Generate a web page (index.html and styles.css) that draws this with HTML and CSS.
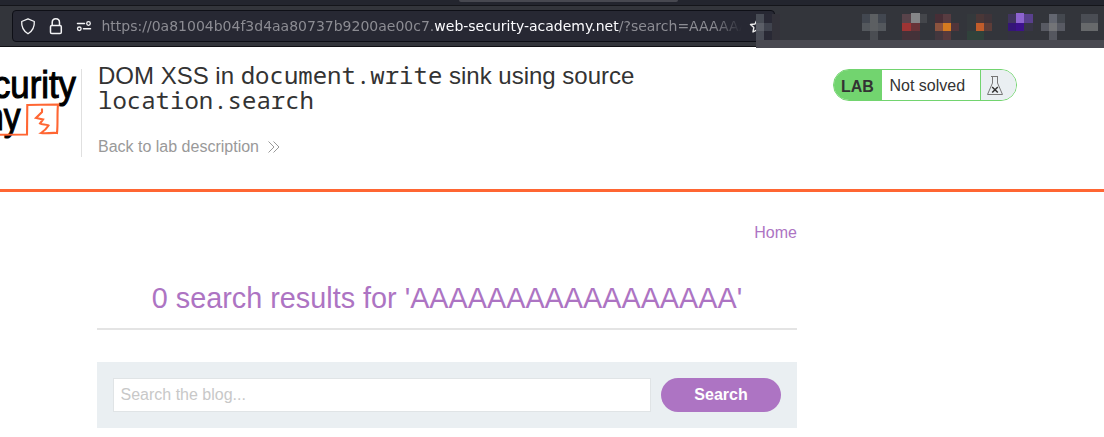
FILE: index.html
```
<!DOCTYPE html>
<html lang="en">
<head>
<meta charset="utf-8">
<title>DOM XSS in document.write sink using source location.search</title>
<link rel="stylesheet" href="styles.css">
</head>
<body>
<div class="browser">
  <div class="tabs"><div class="tab"></div></div>
  <div class="toolbar">
    <div class="address">
      <svg class="icons" width="88" height="30" fill="none" stroke="#f4f4f6" stroke-width="1.5" stroke-linecap="round" stroke-linejoin="round">
        <path d="M15 7.8 L21.3 10.5 C21.7 16 19.5 20 15 22.8 C10.500 20 8.300 16 8.700 10.500Z" stroke-width="1.3"/>
        <rect x="37.500" y="14.500" width="10.800" height="8" rx="1.300"/><path d="M39.200 14V11.500C39.200 6.500 46.500 6.500 46.500 11.500V14"/>
        <path d="M64.500 12.500H71.500M70.500 17.800H77.500"/><circle cx="75.500" cy="12.500" r="1.800" stroke-width="1.300"/><circle cx="66.300" cy="17.800" r="1.800" stroke-width="1.300"/>
      </svg>
      <div class="url">https://0a81004b04f3d4aa80737b9200ae00c7.<span class="domain">web-security-academy.net</span>/?search=AAAAAAAA</div>
      <svg class="star" width="16" height="16" viewBox="0 0 16 16" fill="none" stroke="#eee" stroke-width="1.400" stroke-linejoin="round"><path d="M8 1.800L10 6L14.500 6.500L11.200 9.600L12 14L8 11.800L4 14L4.800 9.600L1.500 6.500L6 6Z"/></svg>
    </div>
  </div>
  <svg class="mosaic" width="348" height="35" shape-rendering="crispEdges">
    <path fill="#484850" d="M0 27h348v8H0z"/><path fill="#36363f" d="M8 1h8v26H8z"/>
    <path fill="#484c55" d="M0 1h8v9H0z"/><path fill="#5b5e67" d="M0 10h8v8H0z"/><path fill="#4a4d57" d="M0 18h8v9H0z"/>
    <path fill="#292935" d="M8 1h8v9H8zM8 18h8v9H8z"/><path fill="#40434e" d="M8 10h8v8H8z"/><path fill="#33323a" d="M16 1h8v26h-8z"/>
    <path fill="#424750" d="M106 1h24v9h-24z"/><path fill="#54585d" d="M106 10h24v8h-24z"/><path fill="#5c5f62" d="M114 1h8v17h-8z"/><path fill="#4a4d52" d="M114 18h8v9h-8z"/>
    <path fill="#58434a" d="M146 1h9v9h-9z"/><path fill="#858688" d="M155 0h9v10h-9z"/><path fill="#9e3434" d="M146 10h9v8h-9z"/><path fill="#683438" d="M155 10h9v8h-9z"/><path fill="#443239" d="M146 18h18v9h-18z"/>
    <path fill="#44464b" d="M164 1h7v9h-7z"/><path fill="#472e36" d="M179 1h8v9h-8z"/><path fill="#583c41" d="M187 1h8v9h-8z"/><path fill="#8b533e" d="M179 10h8v8h-8z"/><path fill="#d57b20" d="M187 10h8v8h-8z"/><path fill="#51353a" d="M195 10h8v8h-8z"/><path fill="#43373e" d="M179 18h8v9h-8z"/><path fill="#573a3d" d="M187 18h8v9h-8z"/>
    <path fill="#34393c" d="M211 1h9v17h-9z"/><path fill="#4a3737" d="M220 1h8v9h-8z"/><path fill="#403439" d="M228 1h8v9h-8z"/><path fill="#c25c2a" d="M220 10h8v8h-8z"/><path fill="#5d3d38" d="M228 10h8v8h-8z"/><path fill="#30423b" d="M211 18h17v9h-17z"/>
    <path fill="#40345f" d="M252 1h8v9h-8z"/><path fill="#8d63cf" d="M260 0h8v10h-8z"/><path fill="#59408d" d="M268 1h9v9h-9z"/><path fill="#351578" d="M252 10h8v8h-8z"/><path fill="#3d118c" d="M260 10h8v8h-8z"/><path fill="#383548" d="M268 10h9v8h-9z"/><path fill="#34333f" d="M252 18h16v9h-16z"/>
    <path fill="#636670" d="M293 1h8v9h-8z"/><path fill="#44484f" d="M301 1h8v9h-8z"/><path fill="#585a63" d="M285 10h24v8h-24z"/><path fill="#737477" d="M293 10h8v8h-8z"/><path fill="#55575f" d="M293 18h8v9h-8z"/>
    <path fill="#4a4d54" d="M325 1h17v9h-17z"/><path fill="#67696b" d="M325 10h17v8h-17z"/>
  </svg>
</div>
<header class="lab-header">
  <svg class="logo" width="81" height="88" viewBox="0 69 81 88">
    <g class="logo-text"><text x="-7" y="97.500" textLength="83" lengthAdjust="spacingAndGlyphs">curity</text><text x="-15" y="129.500" textLength="35.500" lengthAdjust="spacingAndGlyphs">ny</text></g>
    <path d="M0 134.700L27 134.500L27.300 105C38 104.500 48 104.500 58 104.500C57 114 58 124 57 133C51 132.500 46 133.800 41 133C44 131 47 128 48.500 125.500C46 124 42 125 40 123.500L43 119.500L36 118L42 112L42 108.500" fill="none" stroke="#ff6633" stroke-width="2.100"/>
  </svg>
  <div class="title">
    <h2>DOM XSS in <code>document.write</code> sink using source <code>location.search</code></h2>
    <a class="back">Back to lab description<svg width="14" height="12" fill="none" stroke="#999" stroke-width="1"><path d="M1.500 .5L7 6L1.500 11.500M6.500 .5L12 6L6.500 11.500"/></svg></a>
  </div>
  <div class="status"><b>LAB</b><span>Not solved</span><i><svg width="18" height="22" fill="none" stroke="#777" stroke-width="1"><path d="M5 1.500H12M6.500 1.500V8L1.500 19.500H16.500L11.500 8V1.500"/><path d="M6.200 12L11.800 17.500M11.800 12L6.200 17.500" stroke="#333" stroke-width="1.500"/></svg></i></div>
</header>
<main>
  <nav>Home</nav>
  <h1>0 search results for 'AAAAAAAAAAAAAAAAA'</h1>
  <form class="search"><input type="text" placeholder="Search the blog..."><button type="button">Search</button></form>
</main>
</body>
</html>
```
FILE: styles.css
```
* { box-sizing: border-box; }
body { margin: 0; height: 437px; overflow: hidden; background: #fff; color: #333; font: 16px "Liberation Sans", Arial, sans-serif; }
.browser { position: relative; height: 47px; background: #33353b; }
.tabs { height: 6px; background: #23252e; border-bottom: 1px solid #14151a; }
.tab { width: 219px; height: 2px; margin-left: 459px; background: #474850; border-radius: 0 0 3px 3px; }
.toolbar { height: 41px; padding: 4px 12px; border-bottom: 1px solid #101014; }
.address { width: 763px; height: 32px; display: flex; align-items: center; border: 1px solid #0e0f16; border-radius: 4px; background: #272833; }
.icons { flex: none; }
.url { width: 641px; padding-left: .5px; overflow: hidden; white-space: nowrap; color: #8c8c93; font: 14px/30px "DejaVu Sans", sans-serif; -webkit-mask-image: linear-gradient(to right, #000 612px, transparent 641px); mask-image: linear-gradient(to right, #000 612px, transparent 641px); }
.domain { color: #fbfbfe; }
.star { margin-left: 7px; flex: none; }
.mosaic { position: absolute; left: 756px; top: 13px; }
.lab-header { height: 145px; padding-top: 22px; display: flex; align-items: flex-start; border-bottom: 3px solid #ff6633; }
.logo { flex: none; }
.logo-text { font: 38px "Liberation Sans", Arial, sans-serif; fill: #000; stroke: #000; stroke-width: 1.1px; }
.title { width: 736px; height: 88px; padding: 0 150px 0 16px; border-left: 1px solid #e0e0e0; }
h2 { margin: -6px 0 0; font-size: 24px; font-weight: 400; line-height: 25px; }
code { font-family: "Noto Sans Mono", "DejaVu Sans Mono", monospace; font-size: 24px; line-height: 24px; }
.back { display: flex; align-items: center; gap: 8px; margin-top: 25px; line-height: 18px; color: #999; }
.status { width: 184px; height: 32px; margin-left: 16px; display: flex; overflow: hidden; border: 1px solid #72d46f; border-radius: 16px; line-height: 32px; }
.status b { width: 48px; padding: 1px 0 0 7px; background: #72d46f; }
.status span { width: 98px; padding-left: 7.5px; }
.status i { flex: 1; padding: 5px 0 0 5px; border-left: 1px solid #72d46f; background: #eaeff2; line-height: 0; }
main { width: 700px; margin-left: 97px; }
nav { padding-top: 32px; line-height: 18px; text-align: right; color: #ad74c3; }
h1 { height: 60px; margin: 28px 0 32px; padding-top: 12px; border-bottom: 2px solid #e4e4e4; color: #ad74c3; font-size: 28.800px; font-weight: 400; line-height: 33px; text-align: center; }
.search { height: 66px; margin: 0; padding: 16px; display: flex; gap: 10px; background: #eaeff2; }
input { width: 538px; height: 34px; padding: 0 6.5px; border: 1px solid #e0e4e6; background: #fff; font: 16px "Liberation Sans", Arial, sans-serif; }
input::placeholder { color: #c8c8c8; }
button { width: 120px; height: 34px; padding: 0; border: 0; border-radius: 17px; background: #ad74c3; color: #fff; font: bold 16px "Liberation Sans", Arial, sans-serif; }
```
